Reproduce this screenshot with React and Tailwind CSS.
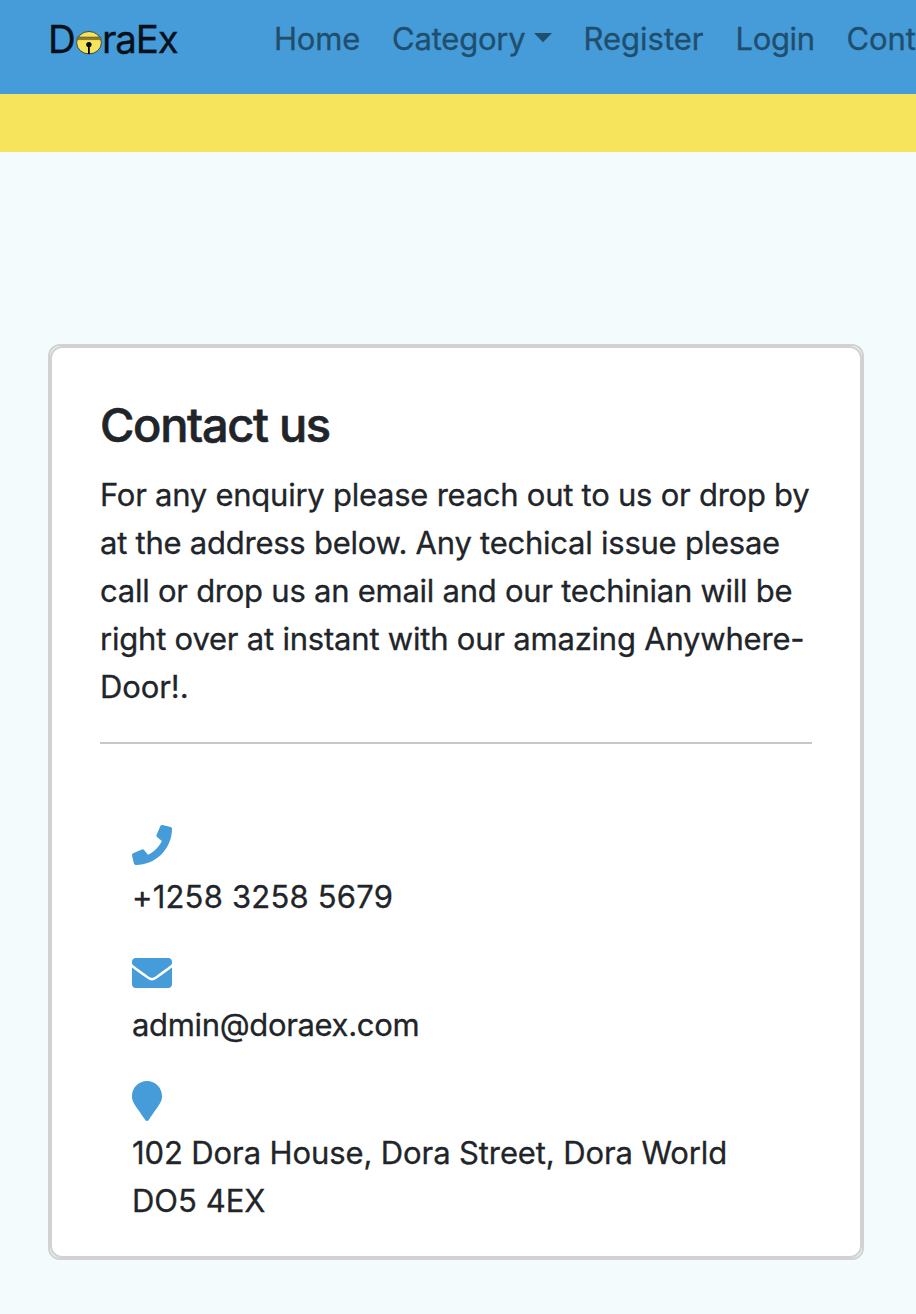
import { FaPhone, FaEnvelope, FaMapMarker } from "react-icons/fa";

function Bell() {
  return (
    <svg className="mt-[16px] h-[24px] w-[26px] shrink-0" viewBox="0 0 26 24">
      <ellipse cx="13" cy="11.7" rx="12.4" ry="11.2" fill="#f6e45c" stroke="#2b3a35" strokeWidth="0.9" />
      <rect x="0.8" y="6" width="24.4" height="2.6" rx="1.2" fill="#8f7c2c" stroke="#4a4526" strokeWidth="0.5" />
      <circle cx="12.9" cy="13.6" r="2.7" fill="#050b10" />
      <rect x="12" y="14" width="1.8" height="9" fill="#050b10" />
    </svg>
  );
}

function Navbar() {
  return (
    <nav className="flex h-[94px] items-start overflow-hidden bg-[#469bd9] pt-[15px] pl-12 text-[31px] leading-[48px] whitespace-nowrap text-[#204e6d]">
      <a className="flex w-[226px] shrink-0 text-[38.5px] text-[#04101a]">
        <span className="w-[28px] shrink-0 tracking-[-1px]">D</span>
        <Bell />
        <span className="tracking-[-1.2px]">raEx</span>
      </a>
      <a className="w-[118px] shrink-0 tracking-[-0.2px]">Home</a>
      <a className="flex w-[191.5px] shrink-0 tracking-[-0.2px]">
        <span className="w-[142px] shrink-0">Category</span>
        <svg className="mt-[18px] h-[10px] w-[18px]" viewBox="0 0 18 10">
          <path d="M0 0h18L9 9.3z" fill="currentColor" />
        </svg>
      </a>
      <a className="w-[152px] shrink-0">Register</a>
      <a className="w-[111px] shrink-0 tracking-[-0.35px]">Login</a>
      <a className="shrink-0 tracking-[-0.1px]">Contact</a>
    </nav>
  );
}

export default function App() {
  return (
    <div className="h-[1314px] w-full overflow-hidden bg-[#f3fbfd] font-['Inter',sans-serif] text-[#212529] [-webkit-text-stroke:0.3px_currentColor]">
      <Navbar />
      <div className="h-[58px] bg-[#f6e45c]" />
      <main className="mt-48 ml-12 h-[916px] w-[816px] rounded-xl border-2 border-[#d2d2d2] bg-white">
        <div className="h-full rounded-[12px] border-2 border-[#d2d2d2] px-12 pt-12 text-[31px] leading-[48px]">
          <h2 className="text-[47px] leading-[58px] font-medium tracking-[-1.35px] [-webkit-text-stroke:0.6px_currentColor]">Contact us</h2>
          <p className="mt-[17px] whitespace-nowrap">
            <span className="block tracking-[-0.25px]">For any enquiry please reach out to us or drop by</span>
            <span className="block tracking-[-0.24px]">at the address below. Any techical issue plesae</span>
            <span className="block tracking-[-0.25px]">call or drop us an email and our techinian will be</span>
            <span className="block tracking-[-0.21px]">right over at instant with our amazing Anywhere-</span>
            <span className="block tracking-[-0.1px]">Door!.</span>
          </p>
          <hr className="mt-[31px] border-t-2 border-[#c8c8c9]" />
          <div className="pl-8 whitespace-nowrap">
            <FaPhone className="mt-[81px] h-10 w-10 text-[#469bd9]" />
            <p className="mt-2 tracking-[0.2px]">+1258 3258 5679</p>
            <FaEnvelope className="mt-8 h-10 w-10 text-[#469bd9]" />
            <p className="mt-2 tracking-[-0.34px]">admin@doraex.com</p>
            <FaMapMarker className="mt-8 h-10 w-[30px] text-[#469bd9]" />
            <p className="mt-2 tracking-[-0.11px]">102 Dora House, Dora Street, Dora World</p>
            <p>DO5 4EX</p>
          </div>
        </div>
      </main>
    </div>
  );
}
